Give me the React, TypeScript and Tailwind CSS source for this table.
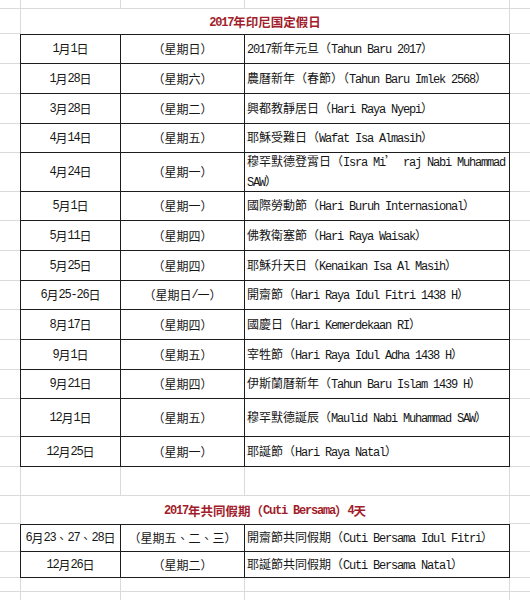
import React from "react";

type Row = {
  date: string;
  day: string;
  name: string[];
  h: string;
};

const holidays: Row[] = [
  { date: "1月1日", day: "（星期日）", name: ["2017新年元旦（Tahun Baru 2017）"], h: "h-[30px]" },
  { date: "1月28日", day: "（星期六）", name: ["農曆新年（春節）（Tahun Baru Imlek 2568）"], h: "h-[30px]" },
  { date: "3月28日", day: "（星期二）", name: ["興都教靜居日（Hari Raya Nyepi）"], h: "h-[30px]" },
  { date: "4月14日", day: "（星期五）", name: ["耶穌受難日（Wafat Isa Almasih）"], h: "h-[29px]" },
  {
    date: "4月24日",
    day: "（星期一）",
    name: ["穆罕默德登霄日（Isra Mi’ raj Nabi Muhammad", "SAW）"],
    h: "h-[39px]",
  },
  { date: "5月1日", day: "（星期一）", name: ["國際勞動節（Hari Buruh Internasional）"], h: "h-[29px]" },
  { date: "5月11日", day: "（星期四）", name: ["佛教衛塞節（Hari Raya Waisak）"], h: "h-[30px]" },
  { date: "5月25日", day: "（星期四）", name: ["耶穌升天日（Kenaikan Isa Al Masih）"], h: "h-[30px]" },
  { date: "6月25-26日", day: "（星期日/一）", name: ["開齋節（Hari Raya Idul Fitri 1438 H）"], h: "h-[29px]" },
  { date: "8月17日", day: "（星期四）", name: ["國慶日（Hari Kemerdekaan RI）"], h: "h-[30px]" },
  { date: "9月1日", day: "（星期五）", name: ["宰牲節（Hari Raya Idul Adha 1438 H）"], h: "h-[30px]" },
  { date: "9月21日", day: "（星期四）", name: ["伊斯蘭曆新年（Tahun Baru Islam 1439 H）"], h: "h-[29px]" },
  { date: "12月1日", day: "（星期五）", name: ["穆罕默德誕辰（Maulid Nabi Muhammad SAW）"], h: "h-[38px]" },
  { date: "12月25日", day: "（星期一）", name: ["耶誕節（Hari Raya Natal）"], h: "h-[30px]" },
];

const cuti: Row[] = [
  { date: "6月23、27、28日", day: "（星期五、二、三）", name: ["開齋節共同假期（Cuti Bersama Idul Fitri）"], h: "h-[28px]" },
  { date: "12月26日", day: "（星期二）", name: ["耶誕節共同假期（Cuti Bersama Natal）"], h: "h-[26px]" },
];

// latin runs use a narrow mono, the rest falls back to the CJK font
function Mix({ text }: { text: string }) {
  const parts = text.split(/([\x20-\x7e]+)/);
  return (
    <>
      {parts.map((p, i) =>
        p === "" ? null : /^[\x20-\x7e]+$/.test(p) ? (
          <span key={i} className="font-['Liberation_Mono',monospace] text-[12px] tracking-[-1.2px] whitespace-pre">
            {p}
          </span>
        ) : (
          <span key={i}>{p}</span>
        )
      )}
    </>
  );
}

function BlankRow({ h }: { h: string }) {
  return (
    <div className={`flex ${h}`}>
      <div className="w-[20px] border-b border-[#dadada]" />
      <div className="w-[101px] border-x border-b border-[#dadada]" />
      <div className="w-[124px] border-r border-b border-[#dadada]" />
      <div className="w-[265px] border-r border-b border-[#dadada]" />
      <div className="flex-1 border-b border-[#dadada]" />
    </div>
  );
}

function TitleRow({ h, children }: { h: string; children: React.ReactNode }) {
  return (
    <div className={`flex ${h}`}>
      <div className="w-[20px] border-b border-[#dadada]" />
      <div className="w-[490px] border-x border-[#dadada] flex items-center justify-center pt-[2px] font-bold text-[12.5px] text-[#a11d2b]">
        {children}
      </div>
      <div className="flex-1 border-b border-[#dadada]" />
    </div>
  );
}

function DataRow({ row, first }: { row: Row; first?: boolean }) {
  const top = first ? "border-t" : "";
  return (
    <div className={`flex ${row.h}`}>
      <div className="w-[20px] border-b border-[#dadada]" />
      <div className={`w-[101px] border-x border-b ${top} border-[#1c1c1c] flex items-center justify-center`}>
        <Mix text={row.date} />
      </div>
      <div className={`w-[124px] border-r border-b ${top} border-[#1c1c1c] flex items-center justify-center`}>
        <Mix text={row.day} />
      </div>
      <div className={`w-[265px] border-r border-b ${top} border-[#1c1c1c] flex flex-col justify-center pl-[2px] leading-[18px]`}>
        {row.name.map((line, i) => (
          <div key={i} className="whitespace-nowrap">
            <Mix text={line} />
          </div>
        ))}
      </div>
      <div className="flex-1 border-b border-[#dadada]" />
    </div>
  );
}

export default function App() {
  return (
    <div className="w-[530px] h-[600px] overflow-hidden bg-white text-[12px] text-[#161616] font-['Noto_Sans_CJK_TC',sans-serif]">
      <BlankRow h="h-[9px]" />
      <TitleRow h="h-[25px]">
        <Mix text="2017年印尼国定假日" />
      </TitleRow>
      {holidays.map((row, i) => (
        <DataRow key={row.date} row={row} first={i === 0} />
      ))}
      <BlankRow h="h-[29px]" />
      <TitleRow h="h-[28px]">
        <Mix text="2017年共同假期（Cuti Bersama）4天" />
      </TitleRow>
      {cuti.map((row, i) => (
        <DataRow key={row.date} row={row} first={i === 0} />
      ))}
      <BlankRow h="h-[14px]" />
      <BlankRow h="h-[30px]" />
    </div>
  );
}
